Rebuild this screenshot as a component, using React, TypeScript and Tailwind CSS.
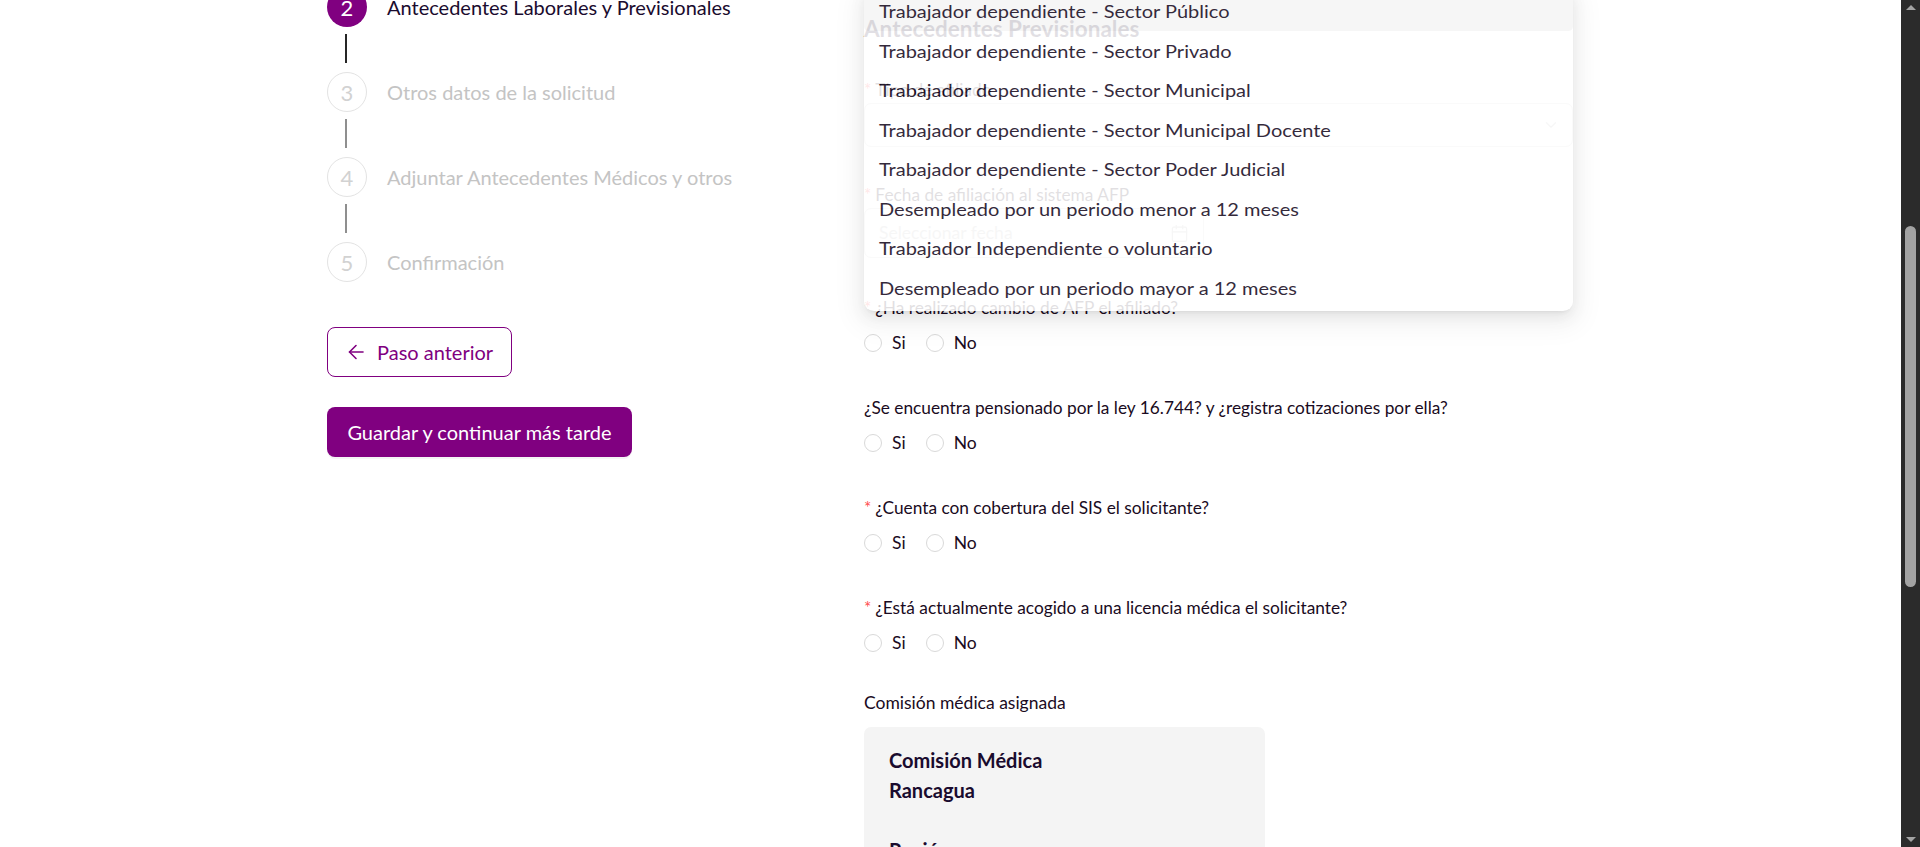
import { Calendar, ChevronDown } from 'lucide-react'

const steps = [
  { n: 2, label: 'Antecedentes Laborales y Previsionales', active: true },
  { n: 3, label: 'Otros datos de la solicitud', active: false },
  { n: 4, label: 'Adjuntar Antecedentes Médicos y otros', active: false },
  { n: 5, label: 'Confirmación', active: false },
]

const options = [
  'Trabajador dependiente - Sector Público',
  'Trabajador dependiente - Sector Privado',
  'Trabajador dependiente - Sector Municipal',
  'Trabajador dependiente - Sector Municipal Docente',
  'Trabajador dependiente - Sector Poder Judicial',
  'Desempleado por un periodo menor a 12 meses',
  'Trabajador Independiente o voluntario',
  'Desempleado por un periodo mayor a 12 meses',
]

const questions = [
  { text: '¿Ha realizado cambio de AFP el afiliado?', required: true },
  { text: '¿Se encuentra pensionado por la ley 16.744? y ¿registra cotizaciones por ella?', required: false },
  { text: '¿Cuenta con cobertura del SIS el solicitante?', required: true },
  { text: '¿Está actualmente acogido a una licencia médica el solicitante?', required: true },
]

function Stepper() {
  return (
    <div className="flex flex-col -mt-[13px]">
      {steps.map((s, i) => (
        <div key={s.n} className="flex flex-col">
          <div className="flex flex-row items-center gap-5 h-10">
            {s.active ? (
              <div className="w-10 h-10 rounded-full bg-[#800080] text-white flex items-center justify-center text-[22px]">
                {s.n}
              </div>
            ) : (
              <div className="w-10 h-10 rounded-full border border-[#e3e3e3] text-[#d2d2d2] flex items-center justify-center text-[22px]">
                {s.n}
              </div>
            )}
            <div className={s.active ? 'text-[20px] text-[#1a0b2e]' : 'text-[20px] text-[#c4c4c4]'}>{s.label}</div>
          </div>
          {i < steps.length - 1 && (
            <div
              className={
                i === 0
                  ? 'ml-[18px] w-[2px] h-[29px] mt-[7px] mb-[9px] bg-[#262626]'
                  : 'ml-[18px] w-[2px] h-[29px] mt-[7px] mb-[9px] bg-[#8f8f8f]'
              }
            />
          )}
        </div>
      ))}
    </div>
  )
}

function Radios() {
  return (
    <div className="flex flex-row items-center h-6 mt-[11px] text-[17.5px] text-[#1a0b22]">
      <label className="flex flex-row items-center mr-[10px]">
        <span className="w-[18px] h-[18px] rounded-full border border-[#d9d9d9] bg-white" />
        <span className="px-[10px]">Si</span>
      </label>
      <label className="flex flex-row items-center">
        <span className="w-[18px] h-[18px] rounded-full border border-[#d9d9d9] bg-white" />
        <span className="px-[10px]">No</span>
      </label>
    </div>
  )
}

function Label({ text, required, className }: { text: string; required: boolean; className: string }) {
  return (
    <div className={'leading-6 text-[17.3px] text-[#1a0b22] ' + className}>
      {required && <span className="text-[#ff4d4f] mr-[4px]">*</span>}
      {text}
    </div>
  )
}

// dropdown caught mid-animation: squashed vertically and not fully opaque
function Dropdown() {
  return (
    <div className="absolute left-0 top-[-12px] w-[709px] origin-top scale-y-[0.897] bg-white rounded-[10px] py-1 opacity-[0.87] shadow-[0_6px_16px_0_rgba(0,0,0,0.08),0_3px_6px_-4px_rgba(0,0,0,0.12),0_9px_28px_8px_rgba(0,0,0,0.05)]">
      {options.map((o, i) => (
        <div
          key={o}
          className={
            i === 0
              ? 'h-[44px] flex items-center pl-[15px] text-[20px] text-[#150a1d] bg-[#f5f5f5] rounded-[5px]'
              : 'h-[44px] flex items-center pl-[15px] text-[20px] text-[#150a1d]'
          }
        >
          {o}
        </div>
      ))}
    </div>
  )
}

export default function App() {
  return (
    <div className="flex flex-row h-[847px] w-full overflow-hidden bg-white font-[Lato,sans-serif]">
      <div className="flex-1 flex flex-row pl-[327px]">
        <div className="w-[537px] shrink-0 flex flex-col">
          <Stepper />
          <button className="mt-[45px] shrink-0 w-[185px] h-[50px] rounded-[8px] border border-[#800080] text-[#800080] text-[20px] flex flex-row items-center pl-[20px] gap-[13px]">
            <svg width="16" height="16" viewBox="0 0 16 16" fill="none" stroke="currentColor" strokeWidth="1.6" strokeLinecap="round" strokeLinejoin="round">
              <path d="M15 8H1.5" />
              <path d="M8 1.5 1.5 8 8 14.5" />
            </svg>
            <span>Paso anterior</span>
          </button>
          <button className="mt-[30px] shrink-0 w-[305px] h-[50px] rounded-[8px] bg-[#800080] text-white text-[20px] flex items-center justify-center shadow-[0_2px_0_rgba(0,0,0,0.045)]">
            Guardar y continuar más tarde
          </button>
        </div>

        <div className="w-[709px] shrink-0 relative">
          <div className="pt-[14px] leading-[30px] text-[22.5px] font-bold text-[#1a0b2e]">Antecedentes Previsionales</div>
          <Label text="Tipo de afiliado" required className="mt-[34px]" />
          <div className="mt-[1px] h-[44px] w-[709px] border border-[#d9d9d9] rounded-[7px] flex flex-row items-center justify-end pr-[12px]">
            <ChevronDown size={18} strokeWidth={1.5} className="text-[#bfbfbf]" />
          </div>
          <Label text="Fecha de afiliación al sistema AFP" required className="mt-[36px]" />
          <div className="mt-[1px] h-[50px] w-[340px] border border-[#d9d9d9] rounded-[7px] flex flex-row items-center justify-between px-[14px]">
            <span className="text-[17.5px] text-[#bfbfbf]">Seleccionar fecha</span>
            <Calendar size={19} strokeWidth={1.5} className="text-[#bfbfbf]" />
          </div>
          {questions.map((q, i) => (
            <div key={q.text}>
              <Label text={q.text} required={q.required} className={i === 0 ? 'mt-[38px]' : 'mt-[41px]'} />
              <Radios />
            </div>
          ))}
          <div className="mt-[36px] leading-6 text-[17.5px] text-[#1a0b22]">Comisión médica asignada</div>
          <div className="mt-[12px] w-[401px] bg-[#f4f4f4] rounded-[7px] pl-[25px] pt-[18px] pb-[30px] text-[20px] font-bold leading-[30px] text-[#1a0b2e]">
            <div>Comisión Médica</div>
            <div>Rancagua</div>
            <div className="mt-[30px]">Región</div>
          </div>
          <Dropdown />
        </div>
      </div>

      <div className="w-[19px] shrink-0 bg-[#2b2b2b] flex flex-col items-center">
        <div className="mt-[5px] w-0 h-0 border-l-[5px] border-r-[5px] border-b-[5px] border-l-transparent border-r-transparent border-b-[#a3a3a3]" />
        <div className="mt-[216px] w-[11px] h-[361px] rounded-full bg-[#a3a3a3]" />
        <div className="mt-auto mb-[5px] w-0 h-0 border-l-[5px] border-r-[5px] border-t-[5px] border-l-transparent border-r-transparent border-t-[#a3a3a3]" />
      </div>
    </div>
  )
}
